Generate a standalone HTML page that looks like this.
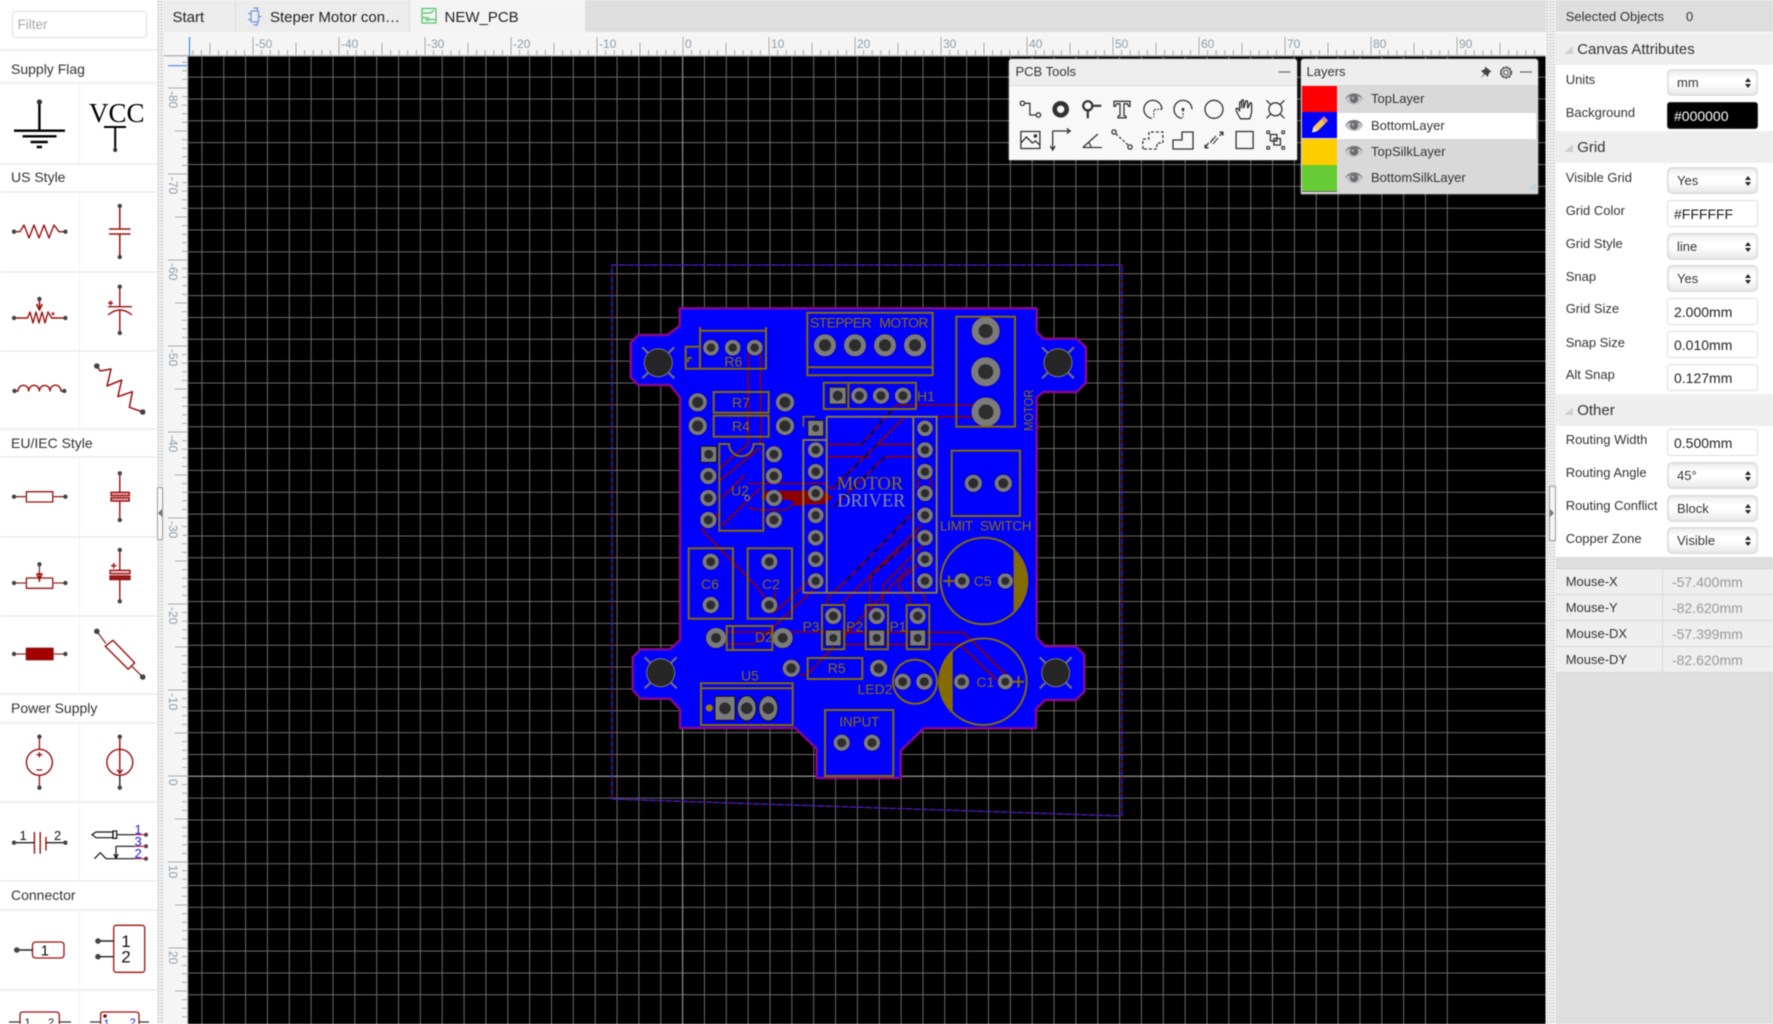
<!DOCTYPE html>
<html><head><meta charset="utf-8"><title>PCB Editor</title>
<style>
html,body{margin:0;padding:0;width:1773px;height:1024px;overflow:hidden;background:#fff;font-family:"Liberation Sans",sans-serif;color:#333}
#w{position:absolute;left:0;top:0;width:1773px;height:1024px;overflow:hidden;filter:blur(.4px)}
.a{position:absolute}
.t{position:absolute;white-space:nowrap;line-height:16px}
.rw{position:absolute;left:0;width:157px;height:2px;background:#efefef}
.cd{position:absolute;left:79px;width:1px;background:#efefef}
.dots{background-color:#f2f2f2;background-image:radial-gradient(#cfcfcf 0.8px,transparent 1px);background-size:3px 3px}
.l{position:absolute;left:1565.7px;font-size:13px;line-height:16px;color:#333;white-space:nowrap}
.sel{position:absolute;left:1667px;width:90.6px;box-sizing:border-box;border:1px solid #ddd;box-shadow:inset 0 0 2px #ccc;border-radius:5px;background:linear-gradient(#ececec,#fff 35%,#fff 50%,#e9e9e9);font-size:13px;padding-left:9px;line-height:26px;color:#333}
.sel:before,.sel:after{content:"";position:absolute;left:76.5px;border-left:3px solid transparent;border-right:3px solid transparent}
.sel:before{top:8px;border-bottom:4px solid #222}
.sel:after{top:14px;border-top:4px solid #222}
.inp{position:absolute;left:1667px;width:90.6px;box-sizing:border-box;border:1px solid #ddd;border-radius:3px;background:#fff;font-size:14px;padding-left:6px;line-height:26px;color:#222}
.sec{position:absolute;left:1555.7px;width:217.3px;background:#eee;font-size:15px;line-height:33px;padding-left:21.5px;box-sizing:border-box;color:#333}
.sec:before{content:"";position:absolute;left:8px;top:13px;width:0;height:0;border-left:9px solid transparent;border-bottom:8px solid #d0d0d0}
.mr{position:absolute;left:1555.7px;width:217.3px;height:26px;background:#eee;border-bottom:1px solid #d8d8d8;box-sizing:border-box}
.mr b{position:absolute;left:10px;top:5px;font-weight:normal;font-size:13px;line-height:16px;color:#333}
.mr i{position:absolute;left:116.3px;top:5px;font-style:normal;font-size:14px;line-height:16px;color:#999}
.mr u{position:absolute;left:106px;top:0;width:1px;height:26px;background:#d8d8d8}
.lr{position:absolute;left:1337px;width:199px;height:26px;background:#d9d9d9;font-size:13px;line-height:26px;padding-left:34px;box-sizing:border-box;color:#333}
.sw{position:absolute;left:1302px;width:35px;height:26px}
</style></head><body><div id="w">

<!-- tab bar -->
<div class="a" style="left:164px;top:0;width:1381.5px;height:32px;background:#dedede"></div>
<div class="a" style="left:164px;top:0;width:71px;height:32px;background:#ececec"></div>
<div class="a" style="left:236px;top:0;width:173px;height:32px;background:#ececec"></div>
<div class="a" style="left:410px;top:0;width:175px;height:32px;background:#f4f4f4"></div>
<div class="t" style="left:172.5px;top:10px;font-size:15px;color:#222">Start</div>
<div class="t" style="left:270px;top:10px;font-size:15px;color:#222">Steper Motor con…</div>
<div class="t" style="left:444.5px;top:10px;font-size:15px;color:#222">NEW_PCB</div>

<!-- canvas + rulers -->
<svg class="a" style="left:0;top:0" width="1773" height="1024" viewBox="0 0 1773 1024" xmlns="http://www.w3.org/2000/svg" font-family="Liberation Sans, sans-serif">
<defs>
<clipPath id="hc"><rect x="189" y="32" width="1356.5" height="24"/></clipPath>
<clipPath id="vc"><rect x="164" y="56" width="24" height="968"/></clipPath>
<clipPath id="cc"><rect x="188" y="56" width="1357.5" height="968"/></clipPath>
<g id="ht"><path d="M0 37V55M8.6 50V55M17.2 50V55M25.8 50V55M34.4 50V55M43 43V55M51.6 50V55M60.2 50V55M68.8 50V55M77.4 50V55"/></g>
<g id="vt"><path d="M168 0H187M182 8.6H187M182 17.2H187M182 25.8H187M182 34.4H187M175 43H187M182 51.6H187M182 60.2H187M182 68.8H187M182 77.4H187"/></g>
</defs>
<rect x="164" y="32" width="1381.5" height="24" fill="#f5f5f5"/>
<rect x="164" y="56" width="24" height="968" fill="#f5f5f5"/>
<rect x="188" y="56" width="1357.5" height="968" fill="#000"/>
<rect x="164" y="55" width="1381.5" height="1.5" fill="#b5b5b5"/>
<rect x="187" y="56" width="1.2" height="968" fill="#bbb"/>
<g clip-path="url(#hc)" stroke="#aaa" stroke-width="1" fill="none">
<use href="#ht" x="167"/><use href="#ht" x="253"/><use href="#ht" x="339"/><use href="#ht" x="425"/><use href="#ht" x="511"/><use href="#ht" x="597"/><use href="#ht" x="683"/><use href="#ht" x="769"/><use href="#ht" x="855"/><use href="#ht" x="941"/><use href="#ht" x="1027"/><use href="#ht" x="1113"/><use href="#ht" x="1199"/><use href="#ht" x="1285"/><use href="#ht" x="1371"/><use href="#ht" x="1457"/>
</g>
<g clip-path="url(#vc)" stroke="#aaa" stroke-width="1" fill="none">
<use href="#vt" y="2"/><use href="#vt" y="88"/><use href="#vt" y="174"/><use href="#vt" y="260"/><use href="#vt" y="346"/><use href="#vt" y="432"/><use href="#vt" y="518"/><use href="#vt" y="604"/><use href="#vt" y="690"/><use href="#vt" y="776"/><use href="#vt" y="862"/><use href="#vt" y="948"/>
</g>
<g font-size="12" fill="#8f9ba6">
<text x="255" y="48">-50</text><text x="341" y="48">-40</text><text x="427" y="48">-30</text><text x="513" y="48">-20</text><text x="599" y="48">-10</text><text x="685" y="48">0</text><text x="771" y="48">10</text><text x="857" y="48">20</text><text x="943" y="48">30</text><text x="1029" y="48">40</text><text x="1115" y="48">50</text><text x="1201" y="48">60</text><text x="1287" y="48">70</text><text x="1373" y="48">80</text><text x="1459" y="48">90</text>
<text transform="translate(169,91) rotate(90)">-80</text>
<text transform="translate(169,177) rotate(90)">-70</text>
<text transform="translate(169,263) rotate(90)">-60</text>
<text transform="translate(169,349) rotate(90)">-50</text>
<text transform="translate(169,435) rotate(90)">-40</text>
<text transform="translate(169,521) rotate(90)">-30</text>
<text transform="translate(169,607) rotate(90)">-20</text>
<text transform="translate(169,693) rotate(90)">-10</text>
<text transform="translate(169,779) rotate(90)">0</text>
<text transform="translate(169,865) rotate(90)">10</text>
<text transform="translate(169,951) rotate(90)">20</text>
</g>
<path d="M189.5 37V56" stroke="#3d8ae0" stroke-width="1.2"/>
<path d="M168 65.7H187" stroke="#3d8ae0" stroke-width="1.2"/>

<!-- grid -->
<g stroke="#6a6a6a" stroke-width="1" fill="none" clip-path="url(#cc)">
<path d="M201.9 56v968m21.85-968v968m21.85-968v968m21.85-968v968m21.85-968v968m21.85-968v968m21.85-968v968m21.85-968v968m21.85-968v968m21.85-968v968m21.85-968v968m21.85-968v968m21.85-968v968m21.85-968v968m21.85-968v968m21.85-968v968m21.85-968v968m21.85-968v968m21.85-968v968m21.85-968v968m21.85-968v968m21.85-968v968m21.85-968v968m21.85-968v968m21.85-968v968m21.85-968v968m21.85-968v968m21.85-968v968m21.85-968v968m21.85-968v968m21.85-968v968m21.85-968v968m21.85-968v968m21.85-968v968m21.85-968v968m21.85-968v968m21.85-968v968m21.85-968v968m21.85-968v968m21.85-968v968m21.85-968v968m21.85-968v968m21.85-968v968m21.85-968v968m21.85-968v968m21.85-968v968m21.85-968v968m21.85-968v968m21.85-968v968m21.85-968v968m21.85-968v968m21.85-968v968m21.85-968v968m21.85-968v968m21.85-968v968m21.85-968v968m21.85-968v968m21.85-968v968"/>
<path d="M188 77.1h1358m-1358 21.85h1358m-1358 21.85h1358m-1358 21.85h1358m-1358 21.85h1358m-1358 21.85h1358m-1358 21.85h1358m-1358 21.85h1358m-1358 21.85h1358m-1358 21.85h1358m-1358 21.85h1358m-1358 21.85h1358m-1358 21.85h1358m-1358 21.85h1358m-1358 21.85h1358m-1358 21.85h1358m-1358 21.85h1358m-1358 21.85h1358m-1358 21.85h1358m-1358 21.85h1358m-1358 21.85h1358m-1358 21.85h1358m-1358 21.85h1358m-1358 21.85h1358m-1358 21.85h1358m-1358 21.85h1358m-1358 21.85h1358m-1358 21.85h1358m-1358 21.85h1358m-1358 21.85h1358m-1358 21.85h1358m-1358 21.85h1358m-1358 21.85h1358m-1358 21.85h1358m-1358 21.85h1358m-1358 21.85h1358m-1358 21.85h1358m-1358 21.85h1358m-1358 21.85h1358m-1358 21.85h1358m-1358 21.85h1358m-1358 21.85h1358m-1358 21.85h1358"/>
</g>
<path d="M188 776.3H1545.5M682.6 56V1024" stroke="#a0a0a0" stroke-width="1" fill="none"/>

<!-- board outline area -->
<path d="M612 265H1122V816L612 799Z" fill="none" stroke="#b00000" stroke-width="1"/>
<path d="M612 265H1122V816L612 799Z" fill="none" stroke="#2222ff" stroke-width="1.4" stroke-dasharray="5 3"/>

<path d="M679.7 308.3H1036.7V331.7L1043.3 338.7H1076.7L1086 347.3V382.7L1076.7 392H1043.3L1036.7 397.3V637.3L1045 646.3H1075.7L1084.3 654.7V691.7L1075.7 700H1045L1036 709V728.3H924L900.7 750.7V778H816.7V748.7L795.3 728H680V709.3L670 698.7H640.7L632.7 690V657.3L640.7 649.3H670L680 640V397.3L670 385H638.3L630.7 377.3V342.7L638.3 335H667.3L679.7 326Z" fill="#0000ff" stroke="#8a0a8a" stroke-width="2.4" stroke-linejoin="round"/>

<!-- mounting holes -->
<g stroke="#6e6e78" stroke-width="2.2" fill="none">
<path d="M642.3 347.3L674.3 378.3M674.3 347.3L642.3 378.3"/>
<path d="M1042 347.3L1074 378.3M1074 347.3L1042 378.3"/>
<path d="M644.7 657.3L676.7 688.3M676.7 657.3L644.7 688.3"/>
<path d="M1039.7 657.3L1071.7 688.3M1071.7 657.3L1039.7 688.3"/>
</g>
<g fill="#262626" stroke="#777" stroke-width="1">
<circle cx="658.3" cy="362.7" r="14"/><circle cx="1058" cy="362.7" r="14"/><circle cx="660.7" cy="672.7" r="14"/><circle cx="1055.7" cy="672.7" r="14"/>
</g>

<!-- traces -->
<g fill="none" stroke="#8e0000" stroke-width="1.6" stroke-linejoin="round">
<path d="M748.3 350V444M760.7 350V444"/>
<path d="M826 444.3H861.7L896.7 405H974"/>
<path d="M973.3 416.7H905L877.3 444.3H915"/>
<path d="M826 456.7H870"/>
<path d="M918.3 456.7H885L833.3 507.3"/>
<path d="M831.7 489.3L877.3 444.3"/>
<path d="M918.3 478V488M931 478V488"/>
<path d="M748 483.5H825L831.7 489.3"/>
<path d="M748 507L757 510H786L792 505H803"/>
<path d="M720 468L748 444M718 482L760 448M722 526L760 488M722 498L745 475"/>
<path d="M720 512L702.3 530L710 538.3L756.7 586.7L766.7 600"/>
<path d="M775 590V603"/>
<path d="M773.3 613.3L810 580"/>
<path d="M726.7 632H860M726.7 644H755L813.3 590"/>
<path d="M800 675H806.7L910 566.7"/>
<path d="M915 511L841.7 585L828 597L826.7 605"/>
<path d="M921.7 525L841.7 603.3"/>
<path d="M923 530L871.7 575L870 581.7V605"/>
<path d="M923 545L883.3 585L882.7 605"/>
<path d="M918.3 565L900 580L898.3 587L908.3 597L911 605"/>
<path d="M910 581.7L921.7 593L925 598V605"/>
<path d="M845 632.3H963.3L1006.7 675"/>
<path d="M845 644.3H960L996.7 680"/>
</g>
<path d="M760 497L767 490.5H823L833 497.5L823 504.5H795L790 500H767Z" fill="#8e0000"/>
<g fill="none" stroke="#000" stroke-width="1.2" stroke-dasharray="6 7">
<path d="M885 456.7L833.3 507.3M877.3 444.3L831.7 489.3M861.7 444.3L896.7 405M915 511L841.7 585M923 530L871.7 575"/>
</g>

<!-- pads -->
<g fill="#2d2d2d" stroke="#7b7b7b" style="filter:drop-shadow(0 0 .7px #200)">
<g stroke-width="5">
<circle cx="825" cy="345.3" r="8.5"/><circle cx="855" cy="345.3" r="8.5"/><circle cx="885" cy="345.3" r="8.5"/><circle cx="915" cy="345.3" r="8.5"/>
</g>
<g stroke-width="7">
<circle cx="985.7" cy="331" r="10.5"/><circle cx="985.7" cy="371.7" r="11"/><circle cx="986" cy="412" r="11"/>
</g>
<g stroke-width="3.6">
<circle cx="711" cy="347.7" r="6"/><circle cx="732.7" cy="347.7" r="6"/><circle cx="754.7" cy="347.7" r="6"/>
<circle cx="859.3" cy="395.7" r="6.3"/><circle cx="881" cy="395.7" r="6.3"/><circle cx="903" cy="395.7" r="6.3"/>
<circle cx="973.3" cy="483.3" r="6.8"/><circle cx="1003.3" cy="483.3" r="6.8"/>
<circle cx="697.7" cy="402.3" r="7.3"/><circle cx="697.7" cy="426" r="7.3"/><circle cx="785" cy="402.3" r="7.3"/><circle cx="785" cy="426" r="7.3"/>
<circle cx="708.3" cy="476" r="6.3"/><circle cx="708.3" cy="498" r="6.3"/><circle cx="708.3" cy="520" r="6.3"/>
<circle cx="774" cy="454.3" r="6.3"/><circle cx="774" cy="476" r="6.3"/><circle cx="774" cy="498" r="6.3"/><circle cx="774" cy="520" r="6.3"/>
<circle cx="815.7" cy="450" r="6"/><circle cx="815.7" cy="471.7" r="6"/><circle cx="815.7" cy="493.3" r="6"/><circle cx="815.7" cy="515.3" r="6"/><circle cx="815.7" cy="537.7" r="6"/><circle cx="815.7" cy="559.3" r="6"/><circle cx="815.7" cy="581" r="6"/>
<circle cx="925" cy="428.3" r="6"/><circle cx="925" cy="450" r="6"/><circle cx="925" cy="471.7" r="6"/><circle cx="925" cy="493.3" r="6"/><circle cx="925" cy="515.3" r="6"/><circle cx="925" cy="537.7" r="6"/><circle cx="925" cy="559.3" r="6"/><circle cx="925" cy="581" r="6"/>
<circle cx="710.7" cy="561.7" r="6.3"/><circle cx="710.7" cy="605" r="6.3"/><circle cx="769.3" cy="561.7" r="6.3"/><circle cx="769.3" cy="605" r="6.3"/>
<circle cx="791.3" cy="668.3" r="6.8"/><circle cx="878.7" cy="668.3" r="6.8"/>
<circle cx="833.3" cy="616" r="6.3"/><circle cx="876.7" cy="616" r="6.3"/><circle cx="917.7" cy="616" r="6.3"/>
<circle cx="902.7" cy="681.7" r="6.3"/><circle cx="924.3" cy="681.7" r="6.3"/>
<circle cx="961.7" cy="681.7" r="5.8"/><circle cx="1005.3" cy="681.7" r="5.8"/><circle cx="962" cy="581" r="5.8"/><circle cx="1005.3" cy="581" r="5.8"/>
<circle cx="841.7" cy="742.7" r="6.3"/><circle cx="872" cy="742.7" r="6.3"/>
</g>
<g stroke-width="5">
<circle cx="716" cy="638" r="7.5"/><circle cx="782.7" cy="638" r="7.5"/>
</g>
</g>
<!-- square pads -->
<g fill="#7b7b7b" stroke="#111" stroke-width="1">
<rect x="829.2" y="387.2" width="17" height="17"/><rect x="700.7" y="446.3" width="16" height="16"/><rect x="807.7" y="420.3" width="16" height="16"/><rect x="825.3" y="630" width="16" height="16"/><rect x="868.7" y="630" width="16" height="16"/><rect x="909.7" y="630" width="16" height="16"/><rect x="715" y="696.3" width="20" height="24"/>
<ellipse cx="746.7" cy="708.3" rx="9.5" ry="12.5"/><ellipse cx="768.3" cy="708.3" rx="9.5" ry="12.5"/>
</g>
<g fill="#2d2d2d">
<circle cx="837.7" cy="395.7" r="5"/><circle cx="708.7" cy="454.3" r="4.5"/><circle cx="815.7" cy="428.3" r="3.5"/><circle cx="833.3" cy="638" r="4"/><circle cx="876.7" cy="638" r="4"/><circle cx="917.7" cy="638" r="4"/><circle cx="725" cy="708.3" r="5.8"/><circle cx="746.7" cy="708.3" r="5.8"/><circle cx="768.3" cy="708.3" r="5.8"/>
</g>

<!-- silk -->
<g fill="none" stroke="#846c00" stroke-width="2">
<path d="M700 330.7H766V368.7H700ZM700 327V331M766 327V331M700 346.7H685.7V368.7H700M688 358H692M688 358V362"/>
<path d="M807.3 312.7H932.7V375.3H807.3ZM807.3 367.3H932.7"/>
<path d="M823.7 382.7H916V409H823.7ZM848.3 382.7V409"/>
<rect x="956.3" y="316.7" width="58.7" height="110"/>
<rect x="951.7" y="450.7" width="68.3" height="65.3"/>
<rect x="713.7" y="392" width="55" height="20.7"/>
<rect x="713.7" y="415.7" width="55" height="21"/>
<path d="M729 444H719.3V530.7H763.3V444H753.5A12 12 0 0 1 729 444Z"/>
<path d="M826.7 416.7H936.7V592.7H803.3V440H826.7M826.7 416.7V592.7M913.3 416.7V592.7" stroke="#8a7a3a"/>
<path d="M803.3 427V416.7H815" stroke-width="1.6"/>
<rect x="688.7" y="548.3" width="44.3" height="70.4"/>
<rect x="747.7" y="548.3" width="44.3" height="70.4"/>
<rect x="822" y="605" width="22.3" height="44.3"/>
<rect x="865.7" y="605" width="22.3" height="44.3"/>
<rect x="906.7" y="605" width="22.6" height="44.3"/>
<rect x="807.7" y="658" width="54.6" height="21"/>
<path d="M726.7 626H772.3V650H726.7ZM732.7 626V650"/>
<path d="M701 683.3H792.7V725H701ZM701 688.3H792.7"/>
<rect x="825" y="710" width="68.3" height="66"/>
<circle cx="984" cy="581" r="43.3"/>
<circle cx="983.3" cy="681.7" r="43.3"/>
<circle cx="915" cy="681.7" r="22"/>
<path d="M943.5 581H954.5M949 575.5V586.5M1013 681.7H1024M1018.5 676V687.5"/>
</g>
<path d="M1013.6 548.8A43.3 43.3 0 0 1 1013.6 613.2Z" fill="#846c00"/>
<path d="M952.7 649.4A43.3 43.3 0 0 0 952.7 714Z" fill="#846c00"/>
<circle cx="709.3" cy="708" r="3.6" fill="#9a7d00"/>
<circle cx="747.3" cy="498" r="2.4" fill="none" stroke="#7b7b7b" stroke-width="1.2"/>
<g fill="#8a7000" font-size="14" text-anchor="middle">
<text x="733.3" y="366.5">R6</text>
<text x="741" y="407.5">R7</text>
<text x="741" y="431">R4</text>
<text x="740" y="495.5">U2</text>
<text x="926" y="401">H1</text>
<text x="710" y="589">C6</text>
<text x="771" y="589">C2</text>
<text x="764" y="642">D2</text>
<text x="811" y="631.5">P3</text>
<text x="854.7" y="631.5">P2</text>
<text x="898" y="631.5">P1</text>
<text x="836.7" y="673">R5</text>
<text x="750" y="680.5">U5</text>
<text x="875" y="694" textLength="35" lengthAdjust="spacingAndGlyphs">LED2</text>
<text x="859.3" y="726.5" textLength="40" lengthAdjust="spacingAndGlyphs">INPUT</text>
<text x="982.7" y="586">C5</text>
<text x="985.3" y="687">C1</text>
<text x="810" y="327.5" font-size="14" word-spacing="5" text-anchor="start" textLength="118.5" lengthAdjust="spacing">STEPPER MOTOR</text>
<text x="940" y="530.5" font-size="13.5" word-spacing="4" text-anchor="start" textLength="91.5" lengthAdjust="spacing">LIMIT SWITCH</text>
<text transform="translate(1033,431) rotate(-90)" font-size="13" text-anchor="start" textLength="41.5" lengthAdjust="spacingAndGlyphs">MOTOR</text>
</g>
<text x="836.7" y="489.3" font-family="Liberation Serif, serif" font-size="19" fill="#8a7410" textLength="66.5" lengthAdjust="spacingAndGlyphs">MOTOR</text>
<text x="837.3" y="506.7" font-family="Liberation Serif, serif" font-size="19" fill="#8b8a90" textLength="68" lengthAdjust="spacingAndGlyphs">DRIVER</text>
</svg>

<!-- left panel -->
<div class="a" style="left:0;top:0;width:157px;height:1024px;background:#fff"></div>
<div class="a dots" style="left:157px;top:0;width:7px;height:1024px"></div>
<div class="a" style="left:157px;top:487px;width:6px;height:53px;box-sizing:border-box;border:1px solid #999;background:#f8f8f8;border-radius:1px"></div>
<div class="a" style="left:11.5px;top:11px;width:135px;height:27px;box-sizing:border-box;border:1px solid #ddd;border-radius:3px;background:#fff;font-size:13.5px;line-height:25px;padding-left:5px;color:#aaa">Filter</div>
<div class="rw" style="top:49px"></div>
<div class="t" style="left:11px;top:61px;font-size:14px">Supply Flag</div>
<div class="rw" style="top:82px"></div>
<div class="rw" style="top:162.5px"></div>
<div class="t" style="left:11px;top:169px;font-size:14px">US Style</div>
<div class="rw" style="top:190.5px"></div>
<div class="rw" style="top:270.5px"></div>
<div class="rw" style="top:350px"></div>
<div class="rw" style="top:427.5px"></div>
<div class="t" style="left:11px;top:435px;font-size:14px">EU/IEC Style</div>
<div class="rw" style="top:455.5px"></div>
<div class="rw" style="top:536px"></div>
<div class="rw" style="top:614.5px"></div>
<div class="rw" style="top:693px"></div>
<div class="t" style="left:11px;top:700px;font-size:14px">Power Supply</div>
<div class="rw" style="top:721.5px"></div>
<div class="rw" style="top:801px"></div>
<div class="rw" style="top:880px"></div>
<div class="t" style="left:11px;top:887px;font-size:14px">Connector</div>
<div class="rw" style="top:908.5px"></div>
<div class="rw" style="top:988.5px"></div>
<div class="cd" style="top:83px;height:80px"></div>
<div class="cd" style="top:191px;height:237px"></div>
<div class="cd" style="top:456px;height:238px"></div>
<div class="cd" style="top:722px;height:159px"></div>
<div class="cd" style="top:909px;height:115px"></div>

<!-- right panel -->
<div class="a dots" style="left:1546px;top:0;width:10px;height:1024px"></div>
<div class="a" style="left:1548.5px;top:486px;width:7px;height:55px;box-sizing:border-box;border:1px solid #999;background:#f4f4f4"></div>
<div class="a" style="left:1550px;top:509px;width:0;height:0;border-left:4px solid #777;border-top:4px solid transparent;border-bottom:4px solid transparent"></div>
<div class="a" style="left:158px;top:509px;width:0;height:0;border-right:4px solid #777;border-top:4px solid transparent;border-bottom:4px solid transparent"></div>
<div class="a" style="left:1555.7px;top:0;width:217.3px;height:1024px;background:#fff"></div>
<div class="a" style="left:1555.7px;top:0;width:217.3px;height:32px;background:#dedede"></div>
<div class="t" style="left:1565.7px;top:9px;font-size:13px">Selected Objects</div>
<div class="t" style="left:1686px;top:9px;font-size:13px">0</div>
<div class="sec" style="top:33px;height:32px">Canvas Attributes</div>
<div class="l" style="top:72px">Units</div><div class="sel" style="top:69px;height:27px">mm</div>
<div class="l" style="top:105px">Background</div><div class="inp" style="top:102px;height:27px;background:#000;color:#fff;border-color:#333">#000000</div>
<div class="sec" style="top:131px;height:32px">Grid</div>
<div class="l" style="top:170px">Visible Grid</div><div class="sel" style="top:167px;height:27px">Yes</div>
<div class="l" style="top:203px">Grid Color</div><div class="inp" style="top:200px;height:27px">#FFFFFF</div>
<div class="l" style="top:236px">Grid Style</div><div class="sel" style="top:233px;height:27px">line</div>
<div class="l" style="top:269px">Snap</div><div class="sel" style="top:265px;height:27px">Yes</div>
<div class="l" style="top:301px">Grid Size</div><div class="inp" style="top:298px;height:27px">2.000mm</div>
<div class="l" style="top:335px">Snap Size</div><div class="inp" style="top:331px;height:27px">0.010mm</div>
<div class="l" style="top:367px">Alt Snap</div><div class="inp" style="top:363.5px;height:27px">0.127mm</div>
<div class="sec" style="top:393.5px;height:32px">Other</div>
<div class="l" style="top:432px">Routing Width</div><div class="inp" style="top:429px;height:27px">0.500mm</div>
<div class="l" style="top:465px">Routing Angle</div><div class="sel" style="top:462px;height:27px">45°</div>
<div class="l" style="top:498px">Routing Conflict</div><div class="sel" style="top:495px;height:27px">Block</div>
<div class="l" style="top:531px">Copper Zone</div><div class="sel" style="top:527px;height:27px">Visible</div>
<div class="a" style="left:1555.7px;top:557px;width:217.3px;height:467px;background:#dedede"></div>
<div class="a" style="left:1555.7px;top:568px;width:217.3px;height:1px;background:#d2d2d2"></div>
<div class="mr" style="top:569px"><u></u><b>Mouse-X</b><i>-57.400mm</i></div>
<div class="mr" style="top:595px"><u></u><b>Mouse-Y</b><i>-82.620mm</i></div>
<div class="mr" style="top:621px"><u></u><b>Mouse-DX</b><i>-57.399mm</i></div>
<div class="mr" style="top:647px"><u></u><b>Mouse-DY</b><i>-82.620mm</i></div>

<!-- PCB Tools panel -->
<div class="a" style="left:1009px;top:59px;width:288px;height:100.5px;background:#f8f8f8;border-radius:3px 3px 0 0;box-shadow:0 0 2px rgba(255,255,255,.6)"></div>
<div class="a" style="left:1009px;top:59px;width:288px;height:26px;background:#eee;border-bottom:1.5px solid #d8d8d8;border-radius:3px 3px 0 0"></div>
<div class="t" style="left:1015.5px;top:64px;font-size:13px">PCB Tools</div>
<!-- Layers panel -->
<div class="a" style="left:1301px;top:59px;width:236.5px;height:135px;background:#d9d9d9;border-radius:3px 3px 0 0;box-shadow:0 0 2px rgba(255,255,255,.6)"></div>
<div class="a" style="left:1301px;top:59px;width:236.5px;height:26px;background:#eee;border-bottom:1px solid #d8d8d8;border-radius:3px 3px 0 0"></div>
<div class="t" style="left:1306.5px;top:64px;font-size:13px">Layers</div>
<div class="sw" style="top:86px;background:#ff0000"></div>
<div class="sw" style="top:112px;background:#0000ff"></div>
<div class="sw" style="top:139px;background:#ffcc00"></div>
<div class="sw" style="top:165px;background:#66cc33;height:26px;border-bottom:1.5px solid #666;box-sizing:content-box"></div>
<div class="lr" style="top:86px">TopLayer</div>
<div class="lr" style="top:112.5px;background:#fff">BottomLayer</div>
<div class="lr" style="top:139px">TopSilkLayer</div>
<div class="lr" style="top:165px">BottomSilkLayer</div>

<!-- overlay icons -->
<svg class="a" style="left:0;top:0" width="1773" height="1024" viewBox="0 0 1773 1024" xmlns="http://www.w3.org/2000/svg" font-family="Liberation Sans, sans-serif">
<!-- tab icons -->
<g fill="none" stroke="#6f94d8" stroke-width="1.2"><rect x="251" y="11" width="7.5" height="11" rx="1"/><path d="M248 13.5h3M248 19.5h3M258.5 16.5h3M253.5 8h4v3M253.5 25h4v-3"/></g>
<g fill="none" stroke="#54c26b" stroke-width="1.2"><rect x="422" y="8.5" width="14" height="14.5"/><path d="M422 13H431L434 10M422 17.5h4M429 19.5h7"/><circle cx="427.5" cy="19" r="1.4"/></g>

<!-- Left panel icons -->
<g stroke="#000" stroke-width="2.4" fill="none">
<path d="M39.4 102V130.7"/><path d="M14 130.7H65M22.6 136.3H56.6M30.6 142H47.8M36.7 147H42"/>
<path d="M104 127H126M115.2 127V150" stroke-width="2"/>
</g>
<circle cx="39.4" cy="102" r="2.6" fill="#333"/><circle cx="115.2" cy="150" r="2" fill="#333"/>
<text x="89" y="122" font-family="Liberation Serif, serif" font-size="27" fill="#000">VCC</text>

<g fill="none" stroke="#9b1010" stroke-width="1.4" stroke-linejoin="round">
<!-- US resistor -->
<path d="M14 231.7H20L24 225L29 238L34 225L39 238L44 225L49 238L54 225L59 231.7H65.4"/>
<!-- US cap -->
<path d="M119.8 206V229M119.8 234V257M109 229H130.5M109 234H130.5" stroke-width="1.5"/>
<!-- rheostat -->
<path d="M14 318H27.5L30 312L33 323L36 312L39 323L42 312L45 323L48 312L51.7 318H65.4"/>
<path d="M39.4 299V310M36.5 304L39.4 310L42.3 304" stroke-width="1.6"/>
<circle cx="53" cy="313.7" r="1" stroke-width="1"/>
<!-- polarized cap -->
<path d="M119.8 286.7V306.7M108 306.7H132M108 315Q120 305 132 315M119.8 310.5V333M108 303H113M110.6 300.5V305.5"/>
<!-- inductor -->
<path d="M14.5 391H18A5.3 5.6 0 0 1 28.7 391A5.3 5.6 0 0 1 39.4 391A5.3 5.6 0 0 1 50 391A5.3 5.6 0 0 1 61 391H64.3"/>
<!-- diag R -->
<path d="M96.8 366L100.3 371L111 369L107 386L121.7 380L117.9 396.7L132.4 391.7L129.4 407.3L142.7 412" stroke-width="1.5"/>
<!-- IEC R -->
<rect x="26.4" y="491.7" width="26.4" height="10.3" stroke-width="1.3"/>
<!-- IEC cap -->
<path d="M119.8 473.3V492.3M119.8 501V520"/>
<rect x="111" y="492.3" width="18.3" height="3.4" fill="#dca0a0"/><rect x="111" y="497.7" width="18.3" height="3.4" fill="#dca0a0"/>
<!-- IEC rheostat -->
<rect x="26.4" y="578" width="26.4" height="10.3" stroke-width="1.3"/>
<path d="M39.4 572V582M36.8 574H42L39.4 580Z"/>
<!-- IEC polarized -->
<path d="M119.8 550V570.3M119.8 579.5V601.3M111 565.7H116.5M113.7 563V568.5" stroke-width="1.4"/>
<rect x="110" y="570.3" width="20" height="3.4" fill="#e9c8c8"/><rect x="110" y="576" width="20" height="3.5" fill="#8f2020"/>
<!-- filled R -->
<rect x="26.4" y="648.3" width="26.6" height="11.4" fill="#a00000"/>
<!-- diag IEC -->
<path d="M105.2 646.3L112.9 640.3L134.7 662.7L128.2 669.3Z"/>
<!-- V source -->
<circle cx="39.4" cy="762.3" r="13"/><path d="M39.4 736.7V749.3M39.4 775.3V787.7M36.5 754.7H42.3M39.4 752V757.5M36.5 770H42.3" stroke-width="1.3"/>
<!-- I source -->
<circle cx="119.8" cy="762.3" r="13"/><path d="M119.8 736.7V749.3M119.8 749.3V773M117 769.5L119.8 773.5L122.6 769.5"/>
<!-- battery -->
<path d="M34.4 832V853.7M40.2 832V853.7M46 837V850.5"/>
<!-- connectors -->
<rect x="32.5" y="942" width="31.5" height="16" rx="3" stroke-width="1.3"/>
<rect x="113.7" y="925.3" width="31" height="47" rx="2.5" stroke-width="1.3"/>
<path d="M20 1032V1015Q20 1012 23 1012H56Q59.3 1012 59.3 1015V1032M100.6 1032V1015Q100.6 1012 103 1012H136Q139 1012 139 1015V1032" stroke-width="1.3"/>
</g>
<path d="M14 496.7H26.4M52.8 496.7H65.4M14 583H26.4M52.8 583H65.4M39.4 564.3V572M14 654H26.4M53 654H65.4" stroke="#8a3030" stroke-width="1.3" fill="none"/>
<path d="M96.8 631.3L105.9 643.5M131.5 666L142.7 677" stroke="#8a3030" stroke-width="1.3" fill="none"/>
<path d="M14 842.7H34M46 842.7H65.4" stroke="#222" stroke-width="1.3" fill="none"/>
<path d="M119.8 775.3V787.7" stroke="#222" stroke-width="1.4" fill="none"/>
<path d="M16.8 950H32.5M98 941H113.7M98 956.7H113.7" stroke="#222" stroke-width="1.4" fill="none"/>
<path d="M9 1022H20M59 1022H71M90 1022H100.6M139 1022H149" stroke="#333" stroke-width="1.3" fill="none"/>
<g fill="#444">
<circle cx="14" cy="231.7" r="2.2"/><circle cx="65.4" cy="231.7" r="2.2"/><circle cx="119.8" cy="206" r="2.2"/><circle cx="119.8" cy="257" r="2.2"/>
<circle cx="14" cy="318" r="2.2"/><circle cx="65.4" cy="318" r="2.2"/><circle cx="39.4" cy="299" r="2.2"/><circle cx="119.8" cy="286.7" r="2.2"/><circle cx="119.8" cy="333" r="2.2"/>
<circle cx="14.5" cy="391" r="2.2"/><circle cx="64.3" cy="391" r="2.2"/><circle cx="96.8" cy="366" r="2.8"/><circle cx="142.7" cy="412" r="2.8"/>
<circle cx="14" cy="496.7" r="2.2"/><circle cx="65.4" cy="496.7" r="2.2"/><circle cx="119.8" cy="473.3" r="2.2"/><circle cx="119.8" cy="520" r="2.2"/>
<circle cx="14" cy="583" r="2.2"/><circle cx="65.4" cy="583" r="2.2"/><circle cx="39.4" cy="564.3" r="2.2"/><circle cx="119.8" cy="550" r="2.2"/><circle cx="119.8" cy="601.3" r="2.2"/>
<circle cx="14" cy="654" r="2.2"/><circle cx="65.4" cy="654" r="2.2"/><circle cx="96.8" cy="631.3" r="2.8"/><circle cx="142.7" cy="677" r="2.8"/>
<circle cx="39.4" cy="736.7" r="2.2"/><circle cx="39.4" cy="787.7" r="2.2"/><circle cx="119.8" cy="736.7" r="2.2"/><circle cx="119.8" cy="787.7" r="2.2"/>
<circle cx="14" cy="842.7" r="2.2"/><circle cx="65.4" cy="842.7" r="2.2"/>
<circle cx="146" cy="834.7" r="2"/><circle cx="146" cy="846.3" r="2"/><circle cx="146" cy="858.7" r="2"/>
<circle cx="16.8" cy="950" r="2.8"/><circle cx="98" cy="941" r="2.8"/><circle cx="98" cy="956.7" r="2.8"/>
</g>
<g font-size="13" fill="#111">
<text x="19.5" y="840">1</text><text x="54" y="840">2</text>
</g>
<g font-size="13" fill="#1414ff">
<text x="134.5" y="834">1</text><text x="134.5" y="846">3</text><text x="134.5" y="858">2</text>
</g>
<!-- audio jack -->
<g fill="none" stroke="#111" stroke-width="1.2">
<path d="M92 834.7L96 832H113V837.7H96Z"/><rect x="113" y="831" width="3.7" height="7.4"/><path d="M116.7 834.7H135M116 846.3H135M116 846.3V858M113.8 854L116 858.2L118.2 854M94.5 858.7L100.3 852.7L106 858.7H135"/>
</g>
<path d="M135 834.7H146M135 846.3H146M135 858.7H146" stroke="#c02020" stroke-width="1.2" fill="none"/>
<text x="44.8" y="955.5" font-size="15" fill="#111" text-anchor="middle">1</text>
<text x="126" y="947" font-size="17" fill="#111" text-anchor="middle">1</text>
<text x="126" y="962.5" font-size="17" fill="#111" text-anchor="middle">2</text>
<text x="27.5" y="1026" font-size="11" fill="#111" text-anchor="middle">1</text>
<text x="51" y="1026" font-size="11" fill="#111" text-anchor="middle">2</text>
<circle cx="105" cy="1016" r="1.8" fill="#8a0000"/>
<text x="106.5" y="1027" font-size="11" fill="#1414ff" text-anchor="middle">1</text>
<text x="132.8" y="1026" font-size="11" fill="#1414ff" text-anchor="middle">2</text>

<!-- panel header controls -->
<path d="M1278.6 72H1290.4" stroke="#777" stroke-width="1.4"/>
<path d="M1520 72H1532" stroke="#777" stroke-width="1.4"/>
<path d="M1485 66.5L1491.5 71.5L1489.5 72.5L1487.5 77L1485 74L1481 78L1480.8 78L1484 73.5L1481 71L1485 69Z" fill="#444"/>
<g fill="none" stroke="#555"><circle cx="1506" cy="72.5" r="2.3" stroke-width="1.2"/><circle cx="1506" cy="72.5" r="5.5" stroke-width="1.3" stroke-dasharray="2.6 1"/><circle cx="1506" cy="72.5" r="4.6" stroke-width="1"/></g>
<path d="M1533 190L1536 187M1529 190.5L1536 183.5" stroke="#9cd5d5" stroke-width="1"/>

<!-- eyes -->
<g>
<g transform="translate(1354,99)"><path d="M-9 0C-5-7.5 5-7.5 9 0C5 7.5-5 7.5-9 0Z" fill="#c4c4c4"/><path d="M-9 0C-5-7.5 5-7.5 9 0C5-4.5-5-4.5-9 0Z" fill="#777"/><circle r="4.2" fill="#6c6c70"/><circle cx="-1.2" cy="-1" r="1.4" fill="#aaa"/></g>
<g transform="translate(1354,125.5)"><path d="M-9 0C-5-7.5 5-7.5 9 0C5 7.5-5 7.5-9 0Z" fill="#c4c4c4"/><path d="M-9 0C-5-7.5 5-7.5 9 0C5-4.5-5-4.5-9 0Z" fill="#777"/><circle r="4.2" fill="#6c6c70"/><circle cx="-1.2" cy="-1" r="1.4" fill="#aaa"/></g>
<g transform="translate(1354,151.5)"><path d="M-9 0C-5-7.5 5-7.5 9 0C5 7.5-5 7.5-9 0Z" fill="#c4c4c4"/><path d="M-9 0C-5-7.5 5-7.5 9 0C5-4.5-5-4.5-9 0Z" fill="#777"/><circle r="4.2" fill="#6c6c70"/><circle cx="-1.2" cy="-1" r="1.4" fill="#aaa"/></g>
<g transform="translate(1354,178)"><path d="M-9 0C-5-7.5 5-7.5 9 0C5 7.5-5 7.5-9 0Z" fill="#c4c4c4"/><path d="M-9 0C-5-7.5 5-7.5 9 0C5-4.5-5-4.5-9 0Z" fill="#777"/><circle r="4.2" fill="#6c6c70"/><circle cx="-1.2" cy="-1" r="1.4" fill="#aaa"/></g>
</g>
<!-- pencil -->
<g transform="translate(1319,125.5) rotate(45)">
<rect x="-3" y="-6" width="6" height="11" fill="#f7c948"/><rect x="-3" y="-10" width="6" height="4" fill="#e58a7a"/><path d="M-3 5H3L0 10Z" fill="#f6e7c8"/>
</g>

<!-- tools row 1 -->
<g fill="none" stroke="#333" stroke-width="1.3">
<g transform="translate(1030.4,109.3)"><circle cx="-8" cy="-6" r="2.2"/><path d="M-5.8-6H-.5V5.7H6"/><circle cx="8" cy="5.7" r="2.2"/></g>
<g transform="translate(1060.7,109.3)"><circle r="6" stroke-width="4.6"/></g>
<g transform="translate(1091.8,109.3)"><circle cx="-4" cy="-3.5" r="4.6" stroke-width="2.2"/><path d="M-4 1V9M1-3.5H9.5" stroke-width="2.2"/></g>
<g transform="translate(1122,109.3)"><path d="M-8-8H8V-3L6.5-3L5.5-5.5H2V6L4 7V8.5H-4V7L-2 6V-5.5H-5.5L-6.5-3H-8Z"/></g>
<g transform="translate(1152.9,109.3)"><path d="M-1 9A9 9 0 1 1 9 0" /><path d="M9 0H1V8" stroke-dasharray="1.5 1.5"/></g>
<g transform="translate(1183,109.3)"><path d="M-1 9A9 9 0 1 1 9 0V0"/><circle r=".8"/><path d="M0 1V8" stroke-dasharray="1.5 1.5"/></g>
<g transform="translate(1214,109.3)"><circle r="9"/></g>
<g transform="translate(1244.6,109.3)"><path d="M-4 9.5C-6 6-8.5 3-8.5 0C-8.5-1.5-7-1.5-6 0L-5 2V-6C-5-8-3-8-3-6V-1V-8C-3-10-1-10-1-8V-1L1-7C1-9 3-9 3-7V-1L5-5C5-7 7-7 7-5V2C7 5 6 7 5 9.5Z"/></g>
<g transform="translate(1275.4,109.3)"><circle r="6.5"/><path d="M-9-9L-4.5-4.5M9-9L4.5-4.5M-9 9L-4.5 4.5M9 9L4.5 4.5"/></g>
</g>
<!-- tools row 2 -->
<g fill="none" stroke="#333" stroke-width="1.3">
<g transform="translate(1030.4,140)"><rect x="-9.5" y="-8.5" width="19" height="17"/><path d="M-9.5 3L-4-3L2 3L5 1L9.5 5"/><circle cx="5" cy="-4" r="1.2" fill="#333"/></g>
<g transform="translate(1060.7,140)"><path d="M-8-9V9M-8-9H9M6-11.5L9.5-9L6-6.5M-10.5 6L-8 10L-5.5 6"/></g>
<g transform="translate(1091.8,140)"><path d="M-9 7.5H10M-9 7.5L6-6M-3 2.5A8 8 0 0 1-1 7.5"/></g>
<g transform="translate(1122,140)"><circle cx="-8" cy="-8" r="2.1"/><circle cx="8" cy="7" r="2.1"/><path d="M-6-6L6 5" stroke-dasharray="2.5 2"/></g>
<g transform="translate(1152.9,140)"><path d="M-10 9V-1H-4V-8H10V3H4V9Z" stroke-dasharray="3 2"/></g>
<g transform="translate(1183,140)"><path d="M-10 9V0H-1V-8H10V9Z"/></g>
<g transform="translate(1214,140)"><path d="M-9 8L-5.5 3M9-8L5.5-4M-9 8L-8.8 4.5M-9 8L-5.5 7.8M9-8L8.8-4.5M9-8L5.5-7.8"/><path d="M-3 1L2-4M-1 4L4-2M-4 3L1 -3" stroke-width="1"/></g>
<g transform="translate(1244.6,140)"><rect x="-8.5" y="-8.5" width="17" height="17"/></g>
<g transform="translate(1275.4,140)"><rect x="-5" y="-5.5" width="6.5" height="6.5"/><rect x="-1.5" y="-1.5" width="6.5" height="6.5"/><path d="M-8.5-9h2.6v2.6h-2.6zM6.5-9h2.6v2.6h-2.6zM-8.5 6.5h2.6v2.6h-2.6zM6.5 6.5h2.6v2.6h-2.6z" stroke-width="1.1"/></g>
</g>
</svg>
</div></body></html>
